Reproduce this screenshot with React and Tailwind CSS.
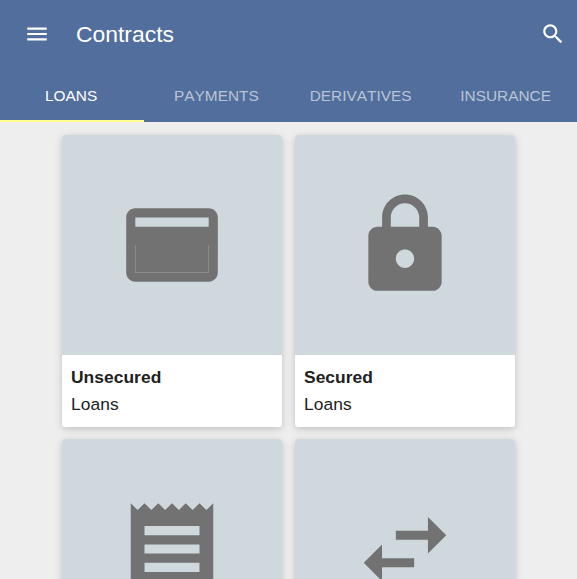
const font = "font-['Liberation_Sans',Arial,sans-serif]";

function Icon({ className, children }) {
  return (
    <svg viewBox="0 0 24 24" fill="currentColor" className={className}>
      {children}
    </svg>
  );
}

const cards = [
  {
    id: 'unsecured',
    title: 'Unsecured',
    subtitle: 'Loans',
    icon: (
      <>
        <path d="M20 4H4c-1.11 0-1.99.89-1.99 2L2 18c0 1.11.89 2 2 2h16c1.11 0 2-.89 2-2V6c0-1.11-.89-2-2-2zm0 14H4v-6h16v6zm0-10H4V6h16v2z" />
        <path d="M4 11.9h16V18H4z" />
      </>
    ),
  },
  {
    id: 'secured',
    title: 'Secured',
    subtitle: 'Loans',
    icon: (
      <path d="M18 8h-1V6c0-2.76-2.24-5-5-5S7 3.24 7 6v2H6c-1.1 0-2 .9-2 2v10c0 1.1.9 2 2 2h12c1.1 0 2-.9 2-2V10c0-1.1-.9-2-2-2zm-6 9c-1.1 0-2-.9-2-2s.9-2 2-2 2 .9 2 2-.9 2-2 2zm3.1-9H8.9V6c0-1.71 1.39-3.1 3.1-3.1 1.71 0 3.1 1.39 3.1 3.1v2z" />
    ),
  },
  {
    id: 'receipt',
    icon: (
      <path d="M18 17H6v-2h12v2zm0-4H6v-2h12v2zm0-4H6V7h12v2zM3 22l1.5-1.5L6 22l1.5-1.5L9 22l1.5-1.5L12 22l1.5-1.5L15 22l1.5-1.5L18 22l1.5-1.5L21 22V2l-1.5 1.5L18 2l-1.5 1.5L15 2l-1.5 1.5L12 2l-1.5 1.5L9 2 7.5 3.5 6 2 4.5 3.5 3 2v20z" />
    ),
  },
  {
    id: 'swap',
    icon: <path d="M6.99 11L3 15l3.99 4v-3H14v-2H6.99v-3zM21 9l-3.99-4v3H10v2h7.01v3L21 9z" />,
  },
];

const tabs = ['LOANS', 'PAYMENTS', 'DERIVATIVES', 'INSURANCE'];

export default function App() {
  return (
    <div className={`flex h-screen flex-col overflow-hidden bg-[#eeeeee] text-[#212121] ${font}`}>
      <header className="h-[122px] shrink-0 bg-[#526e9c] text-white">
        <div className="flex h-[68px] items-center pr-[11px] pl-6">
          <Icon className="size-[26px] shrink-0">
            <path d="M3 18h18v-2H3v2zm0-5h18v-2H3v2zm0-7v2h18V6H3z" />
          </Icon>
          <h1 className="ml-[26px] flex-1 text-[22.9px] leading-8">Contracts</h1>
          <Icon className="size-[26px] shrink-0">
            <path d="M15.5 14h-.79l-.28-.27C15.41 12.59 16 11.11 16 9.5 16 5.91 13.09 3 9.5 3S3 5.91 3 9.5 5.91 16 9.5 16c1.61 0 3.09-.59 4.23-1.57l.27.28v.79l5 4.99L20.49 19l-4.99-5zm-6 0C7.01 14 5 11.99 5 9.5S7.01 5 9.5 5 14 7.01 14 9.5 11.99 14 9.5 14z" />
          </Icon>
        </div>
        <nav className="grid h-[54px] grid-cols-4">
          {tabs.map((tab, i) => (
            <button
              key={tab}
              className={
                i === 0
                  ? 'border-b-2 border-[#ffff8d] pt-[3px] pr-0.5 text-[15.4px] text-white [font-kerning:none]'
                  : 'border-b-2 border-transparent pt-[3px] text-[15.4px] text-white/60 [font-kerning:none] last:pl-[1.5px]'
              }
            >
              {tab}
            </button>
          ))}
        </nav>
      </header>
      <main className="mx-auto mt-[13px] grid w-[453px] grid-cols-2 gap-x-[13px] gap-y-3">
        {cards.map((card) => (
          <article
            key={card.id}
            className="h-[292px] overflow-hidden rounded-[3px] bg-white shadow-[0_2px_5px_rgba(0,0,0,0.08),0_2px_10px_rgba(0,0,0,0.12)]"
          >
            <div className="flex h-[220px] items-center justify-center bg-[#cfd8dd] text-[#727272]">
              <Icon className="size-[110px]">{card.icon}</Icon>
            </div>
            {card.title && (
              <div className="px-[9px] pt-[9px] text-[17.4px] leading-[27px] tracking-[0.05px]">
                <h2 className="font-bold">{card.title}</h2>
                <p>{card.subtitle}</p>
              </div>
            )}
          </article>
        ))}
      </main>
    </div>
  );
}
